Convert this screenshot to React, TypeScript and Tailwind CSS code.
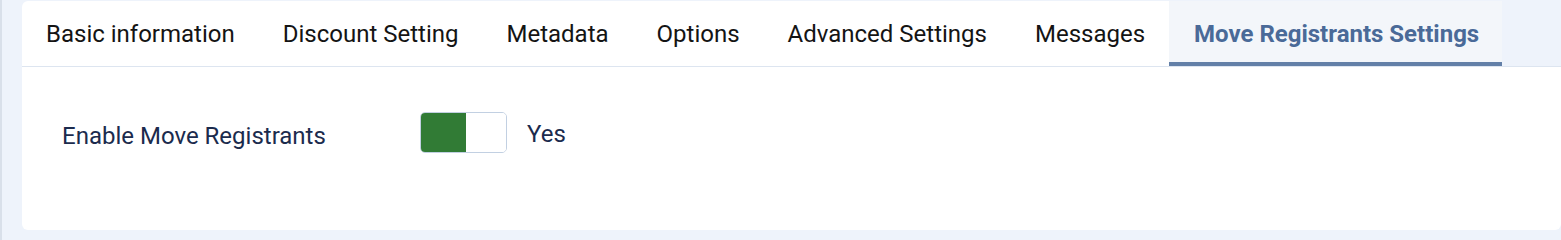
import * as React from "react";

const TABS = [
  "Basic information",
  "Discount Setting",
  "Metadata",
  "Options",
  "Advanced Settings",
  "Messages",
  "Move Registrants Settings",
];

export default function App() {
  const [active, setActive] = React.useState(6);
  const [enabled, setEnabled] = React.useState(true);

  return (
    <div className="h-[240px] w-full overflow-hidden border-l-2 border-[#d9e0ea] bg-[#eef3fb] pl-5 pt-px font-['Roboto',sans-serif]">
      <div className="flex h-[229px] flex-col">
        <div className="flex border-b border-[#dde5f0]">
          <div className="flex overflow-hidden rounded-tl-md bg-white">
            {TABS.map((tab, i) => (
              <button
                key={tab}
                onClick={() => setActive(i)}
                className={
                  i === active
                    ? "h-[65px] border-b-4 border-[#6380a8] bg-[#f3f6fa] pl-[25px] pr-[23px] pt-1 text-[24px] font-bold text-[#4a6a98]"
                    : "h-[65px] px-6 text-[24px] text-[#141414]"
                }
              >
                {tab}
              </button>
            ))}
          </div>
        </div>

        <div className="flex-1 rounded-b-md bg-white pl-10 pt-[45px]">
          <div className="flex items-start">
            <div className="w-[358px] pt-[6px] text-[24px] text-[#1b2b4d]">
              Enable Move Registrants
            </div>
            <button
              onClick={() => setEnabled((e) => !e)}
              className="flex h-[41px] w-[87px] overflow-hidden rounded-[5px] border border-[#c2d0e2] bg-white"
            >
              <span className={enabled ? "h-full w-[45px] bg-[#317b35]" : "h-full w-[45px] bg-white"} />
              <span className={enabled ? "h-full flex-1 bg-white" : "h-full flex-1 bg-[#317b35]"} />
            </button>
            <div className="ml-5 pt-1 text-[24px] text-[#1b2b4d]">{enabled ? "Yes" : "No"}</div>
          </div>
        </div>
      </div>
    </div>
  );
}
